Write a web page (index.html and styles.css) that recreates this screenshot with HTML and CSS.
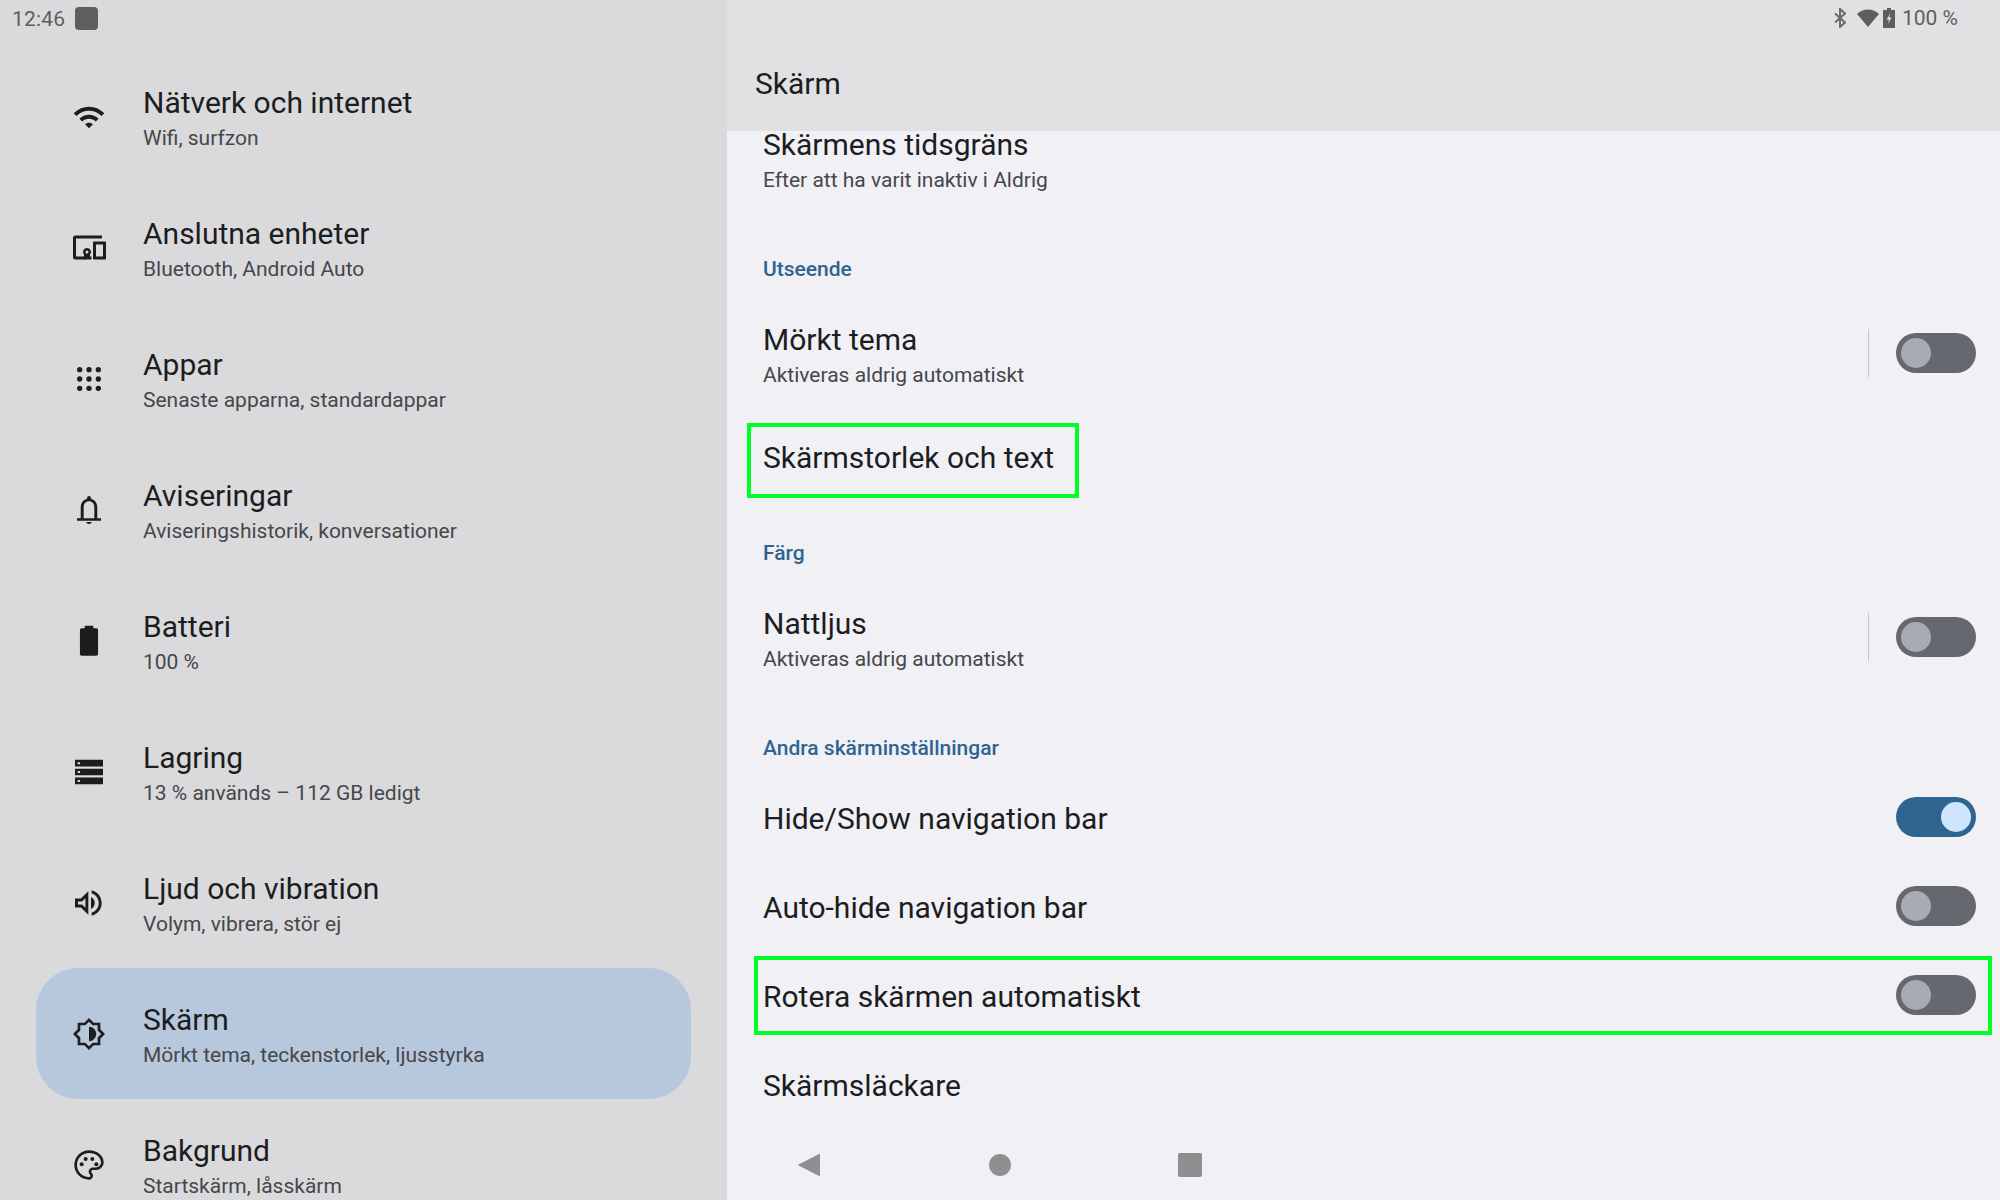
FILE: index.html
```html
<!DOCTYPE html>
<html lang="sv">
<head>
<meta charset="utf-8">
<title>Skärm</title>
<link rel="stylesheet" href="styles.css">
</head>
<body>
<div class="screen">
  <aside class="side">
    <div class="status-left"><span class="clock">12:46</span><span class="notif"></span></div>
    <nav class="menu">
      <div class="mi">
        <svg class="ico" viewBox="0 0 24 24"><path d="M.5 9.200l2.100 2.100c5.200-5.200 13.600-5.200 18.800 0l2.100-2.100C17 2.700 7 2.700.5 9.200zm8.500 8.300l3 3 3-3c-1.700-1.700-4.300-1.700-6 0zm-4.200-4.200l2.100 2.100c2.800-2.800 7.400-2.800 10.200 0l2.100-2.100c-4-4-10.400-4-14.400 0z"/></svg>
        <div class="mt"><div class="t">Nätverk och internet</div><div class="s">Wifi, surfzon</div></div>
      </div>
      <div class="mi">
        <svg class="ico ico-px" viewBox="0 0 32 32"><path d="M2 3.500h27v3H3v18h9v3H2c-1 0-2-1-2-2V5.500c0-1 1-2 2-2z"/><path fill-rule="evenodd" d="M21 9.500h11c.6 0 1 .4 1 1v16c0 .6-.4 1-1 1H21c-.6 0-1-.4-1-1v-16c0-.6.4-1 1-1zm2 3v12h7v-12h-7z"/><path fill-rule="evenodd" d="M14 16a4 4 0 0 1 3 6.600v1.900h1.500v3H10.500v-3H11v-1.900A4 4 0 0 1 14 16zm0 2.500a1.500 1.500 0 1 0 0 3 1.500 1.500 0 0 0 0-3z"/></svg>
        <div class="mt"><div class="t">Anslutna enheter</div><div class="s">Bluetooth, Android Auto</div></div>
      </div>
      <div class="mi">
        <svg class="ico" viewBox="0 0 24 24"><g><circle cx="5" cy="5" r="2"/><circle cx="12" cy="5" r="2"/><circle cx="19" cy="5" r="2"/><circle cx="5" cy="12" r="2"/><circle cx="12" cy="12" r="2"/><circle cx="19" cy="12" r="2"/><circle cx="5" cy="19" r="2"/><circle cx="12" cy="19" r="2"/><circle cx="19" cy="19" r="2"/></g></svg>
        <div class="mt"><div class="t">Appar</div><div class="s">Senaste apparna, standardappar</div></div>
      </div>
      <div class="mi">
        <svg class="ico" viewBox="0 0 24 24"><path fill-rule="evenodd" d="M12 1.500c-.8 0-1.400.6-1.400 1.400v.7C7.600 4.300 5.800 6.800 5.800 10v8.200H3v1.800h18v-1.800h-2.800V10c0-3.200-1.800-5.700-4.800-6.400V2.900c0-.8-.6-1.400-1.400-1.400zM8 18.200V10c0-2.800 1.600-4.600 4-4.600s4 1.800 4 4.600v8.200H8zM10 21c0 1 .9 1.500 2 1.500s2-.5 2-1.500h-4z"/></svg>
        <div class="mt"><div class="t">Aviseringar</div><div class="s">Aviseringshistorik, konversationer</div></div>
      </div>
      <div class="mi">
        <svg class="ico" viewBox="0 0 24 24"><path d="M8.800.5h6.400v2h2.300c.7 0 1.300.6 1.300 1.300v18c0 .7-.6 1.300-1.300 1.300h-11c-.7 0-1.300-.6-1.300-1.300v-18c0-.7.6-1.300 1.300-1.300h2.300z"/></svg>
        <div class="mt"><div class="t">Batteri</div><div class="s">100 %</div></div>
      </div>
      <div class="mi">
        <svg class="ico" viewBox="0 0 24 24"><path fill-rule="evenodd" d="M1.500 2.800h21v5h-21v-5zm0 6.700h21v5h-21v-5zm0 6.700h21v5h-21v-5zM3.500 4.600v1.500h1.800V4.600H3.500zm0 6.700v1.500h1.800v-1.500H3.500zm0 6.700v1.500h1.800V18H3.500z"/></svg>
        <div class="mt"><div class="t">Lagring</div><div class="s">13 % används – 112 GB ledigt</div></div>
      </div>
      <div class="mi">
        <svg class="ico" viewBox="0 0 24 24"><path fill-rule="evenodd" d="M1.500 8.700v6.600h4.400l5.600 5.600V3.100L5.900 8.700H1.500zm7.800-.3v7.200l-2.500-2.500H3.700v-2.200h3.100l2.500-2.500zM13.500 7.500v9c1.700-.8 2.800-2.500 2.800-4.500s-1.100-3.700-2.800-4.500zM14 2.500v2.300c3.100.9 5.300 3.800 5.300 7.200s-2.200 6.300-5.300 7.200v2.300c4.300-1 7.500-4.800 7.500-9.500S18.300 3.500 14 2.500z"/></svg>
        <div class="mt"><div class="t">Ljud och vibration</div><div class="s">Volym, vibrera, stör ej</div></div>
      </div>
      <div class="mi on">
        <svg class="ico" viewBox="0 0 24 24"><path fill-rule="evenodd" d="M12 0l3.500 3.500h5v5L24 12l-3.500 3.500v5h-5L12 24l-3.500-3.500h-5v-5L0 12l3.500-3.500v-5h5L12 0zm0 2.800L9.300 5.500H5.500v3.800L2.800 12l2.700 2.700v3.800h3.800l2.700 2.700 2.700-2.700h3.800v-3.800l2.700-2.700-2.700-2.700V5.500h-3.800L12 2.800zM12 6.600c3 0 5.400 2.400 5.400 5.400s-2.400 5.400-5.400 5.400V6.600z"/></svg>
        <div class="mt"><div class="t">Skärm</div><div class="s">Mörkt tema, teckenstorlek, ljusstyrka</div></div>
      </div>
      <div class="mi">
        <svg class="ico" viewBox="0 0 24 24"><path fill-rule="evenodd" d="M12 1C6 1 1 6 1 12s5 11 11 11c1.700 0 3-1.300 3-3 0-.8-.3-1.400-.8-2-.3-.4-.5-.7-.5-1 0-.7.5-1.200 1.300-1.200h2.200c3.200 0 5.800-2.600 5.800-5.800C23 5 18 1 12 1zm0 2c5 0 9 3.100 9 7 0 2.100-1.700 3.800-3.800 3.800H15c-1.800 0-3.300 1.400-3.300 3.200 0 .8.300 1.500.9 2.200.3.300.4.500.4.800 0 .6-.4 1-1 1-5 0-9-4-9-9s4-9 9-9z"/><circle cx="6.500" cy="11.500" r="1.500"/><circle cx="9.500" cy="7.500" r="1.500"/><circle cx="14.500" cy="7.500" r="1.500"/><circle cx="17.500" cy="11.500" r="1.500"/></svg>
        <div class="mt"><div class="t">Bakgrund</div><div class="s">Startskärm, låsskärm</div></div>
      </div>
    </nav>
  </aside>
  <main class="main">
    <header class="head">
      <div class="status-right">
        <svg class="st-bt" viewBox="0 0 12 20"><path fill="none" stroke="#6a6a6c" stroke-width="2" d="M1 5.500l10 9L6 19V1l5 4.500-10 9"/></svg>
        <svg class="st-wifi" viewBox="0 0 22 18"><path d="M0 5C3 2 6.800.5 11 .5S19 2 22 5L11 18 0 5z"/></svg>
        <svg class="st-bat" viewBox="0 0 12 20"><path fill-rule="evenodd" d="M4 0h4v2h4v18H0V2h4V0zm3.500 5L3.500 11.500H6L5 16l3.500-6.500H6L7.500 5z"/></svg>
        <span class="pct">100 %</span>
      </div>
      <h1 class="ttl">Skärm</h1>
    </header>
    <div class="list">
      <div class="row r-time"><div><div class="t">Skärmens tidsgräns</div><div class="s">Efter att ha varit inaktiv i Aldrig</div></div></div>
      <div class="cat c1">Utseende</div>
      <div class="row r-two"><div><div class="t">Mörkt tema</div><div class="s">Aktiveras aldrig automatiskt</div></div><div class="ctl"><span class="dv"></span><span class="sw"><i></i></span></div></div>
      <div class="row r-one"><div class="t">Skärmstorlek och text</div></div>
      <div class="cat c2">Färg</div>
      <div class="row r-two"><div><div class="t">Nattljus</div><div class="s">Aktiveras aldrig automatiskt</div></div><div class="ctl"><span class="dv"></span><span class="sw"><i></i></span></div></div>
      <div class="cat c3">Andra skärminställningar</div>
      <div class="row r-sw"><div class="t">Hide/Show navigation bar</div><span class="sw active"><i></i></span></div>
      <div class="row r-sw"><div class="t">Auto-hide navigation bar</div><span class="sw"><i></i></span></div>
      <div class="row r-sw"><div class="t">Rotera skärmen automatiskt</div><span class="sw"><i></i></span></div>
      <div class="row r-sw"><div class="t">Skärmsläckare</div></div>
    </div>
    <div class="navbar">
      <svg class="nb" viewBox="0 0 24 24"><path d="M23 1.500v21c0 .6-.4.8-.9.5L1.500 12.500c-.5-.3-.5-.7 0-1L22.100 1c.5-.3.9-.1.9.5z"/></svg>
      <svg class="nb" viewBox="0 0 24 24"><circle cx="12" cy="12" r="11"/></svg>
      <svg class="nb" viewBox="0 0 24 24"><rect x="0" y="0" width="24" height="24" rx="2"/></svg>
    </div>
    <span class="mark mark-a"></span>
    <span class="mark mark-b"></span>
  </main>
</div>
</body>
</html>
```

FILE: styles.css
```css
* { box-sizing: border-box; }
html, body { margin: 0; height: 100%; overflow: hidden; }
body { font-family: Roboto, "Liberation Sans", sans-serif; color: #1c1d1f; background: #f0f0f5; }
.screen { display: flex; width: 2000px; height: 1200px; overflow: hidden; }

.side { width: 727px; height: 1200px; background: #dadadc; flex: none; overflow: hidden; }
.status-left { height: 37px; padding: 0 0 0 12px; display: flex; align-items: center; gap: 10px; margin-bottom: 14px; }
.clock { font-size: 21px; letter-spacing: .2px; color: #5e5e60; }
.notif { width: 23px; height: 23px; border-radius: 4px; background: #5e5e60; }
.menu { padding: 0 36px; }
.mi { height: 131px; display: flex; align-items: center; padding-left: 37px; border-radius: 42px; }
.mi.on { background: #b7c8dc; }
.ico { width: 32px; height: 32px; flex: none; fill: #1c1d1f; margin-right: 38px; overflow: visible; }
.mt { padding-top: 2px; }
.t { font-size: 30px; line-height: 38px; color: #1c1d1f; }
.s { font-size: 21px; line-height: 28px; margin-top: 2px; color: #45474b; }

.main { position: relative; flex: 1; height: 1200px; overflow: hidden; background: #f0f0f5; }
.head { position: relative; z-index: 1; height: 131px; background: #e1e1e3; }
.status-right { height: 36px; display: flex; align-items: center; justify-content: flex-end; padding-right: 42px; }
.st-bt { width: 12px; height: 20px; margin-right: 11px; }
.st-wifi { width: 22px; height: 18px; fill: #5e5e60; margin-right: 4px; }
.st-bat { width: 12px; height: 20px; fill: #5e5e60; margin-right: 7px; }
.pct { font-size: 21px; color: #5e5e60; }
.ttl { margin: 29px 0 0 28px; font-size: 30px; line-height: 38px; font-weight: 400; color: #1c1d1f; }

.list { padding: 0 24px 0 36px; height: 1069px; }
.row { display: flex; align-items: center; justify-content: space-between; }
.r-time { height: 76px; margin-top: -9px; }
.r-two { height: 96px; }
.r-one { height: 76px; margin-top: 17px; }
.r-sw { height: 89px; }
.cat { font-size: 21px; font-weight: 500; color: #2f6490; line-height: 28px; }
.c1 { margin: 57px 0 24px; }
.c2 { margin: 43px 0 24px; }
.c3 { margin: 47px 0 12px; }
.ctl { display: flex; align-items: center; gap: 27px; margin-top: -4px; }
.dv { width: 1.5px; height: 48px; background: #c6c6ca; }
.sw { display: block; width: 80px; height: 40px; padding: 5px; border-radius: 20px; background: #65686f; }
.r-sw .sw { margin-top: -3px; }
.sw i { display: block; width: 30px; height: 30px; border-radius: 50%; background: #a8abb3; }
.sw.active { background: #2f6490; }
.sw.active i { margin-left: 40px; background: #cfe4fd; }

.navbar { position: absolute; left: 0; right: 0; bottom: 0; height: 70px; display: flex; align-items: center; padding: 0 0 0 70px; gap: 166.5px; }
.nb { width: 24px; height: 24px; fill: #8f8f91; }

.mark { position: absolute; z-index: 2; border: 4px solid #00ff24; }
.mark-a { left: 20px; top: 423px; width: 332px; height: 75px; }
.mark-b { left: 27px; top: 956px; width: 1238px; height: 79px; }
```
